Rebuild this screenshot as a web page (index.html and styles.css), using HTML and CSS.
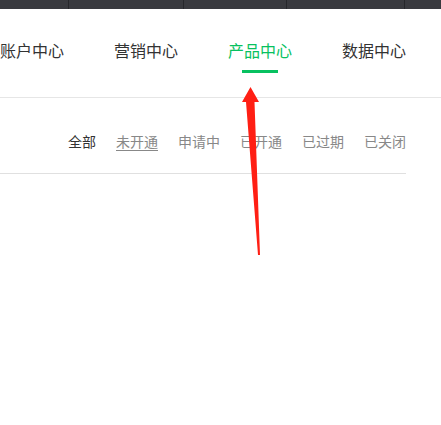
FILE: index.html
```html
<!DOCTYPE html>
<html lang="zh-CN">
  <head>
    <meta charset="utf-8">
    <title>产品中心</title>
    <link rel="stylesheet" href="styles.css">
  </head>
  <body>
    <div class="topbar">
      <div class="cell cell-1"></div>
      <div class="cell cell-2"></div>
      <div class="cell cell-3"></div>
      <div class="cell cell-4"></div>
      <div class="cell cell-5"></div>
    </div>

    <div class="nav">
      <div class="nav-item">账户中心</div>
      <div class="nav-item">营销中心</div>
      <div class="nav-item active">产品中心</div>
      <div class="nav-item">数据中心</div>
    </div>

    <div class="content">
      <div class="filters">
        <span class="filter current">全部</span>
        <span class="filter hover">未开通</span>
        <span class="filter">申请中</span>
        <span class="filter">已开通</span>
        <span class="filter">已过期</span>
        <span class="filter">已关闭</span>
      </div>
    </div>

    <svg class="arrow" width="441" height="425" viewBox="0 0 441 425">
      <path d="M250.5 87 L259 102 L254.5 102 L260 255 L258 255 L246 102 L242 102 Z" fill="#ff1f14" />
    </svg>
  </body>
</html>
```

FILE: styles.css
```css
body {
  margin: 0;
  background: #fff;
  font-family: "Noto Sans CJK SC", "Liberation Sans", sans-serif;
  overflow: hidden;
}
.topbar {
  display: flex;
  height: 9px;
  background: #393a3f;
}
.cell {
  border-right: 1px solid #26272b;
}
.cell-1 { width: 68px; }
.cell-2 { width: 114px; }
.cell-3 { width: 102px; }
.cell-4 { width: 117px; }
.cell-5 { flex: 1; border-right: none; }
.nav {
  display: flex;
  gap: 50px;
  height: 58px;
  padding-top: 30px;
  border-bottom: 1px solid #e6e6e6;
}
.nav-item {
  display: flex;
  flex-direction: column;
  align-items: center;
  font-size: 16px;
  line-height: 22px;
  color: #333;
}
.nav-item.active {
  color: #07c160;
}
.nav-item.active::after {
  content: "";
  width: 36px;
  height: 3px;
  margin-top: 9px;
  background: #07c160;
}
.content {
  width: 406px;
}
.filters {
  display: flex;
  justify-content: flex-end;
  gap: 20px;
  padding: 33px 0 22px;
  border-bottom: 1px solid #e0e0e0;
  font-size: 14px;
  line-height: 20px;
}
.filter {
  color: #888;
}
.filter.current {
  color: #333;
}
.filter.hover {
  text-decoration: underline;
  text-underline-offset: 3px;
}
.arrow {
  position: absolute;
  left: 0;
  top: 0;
}
```
